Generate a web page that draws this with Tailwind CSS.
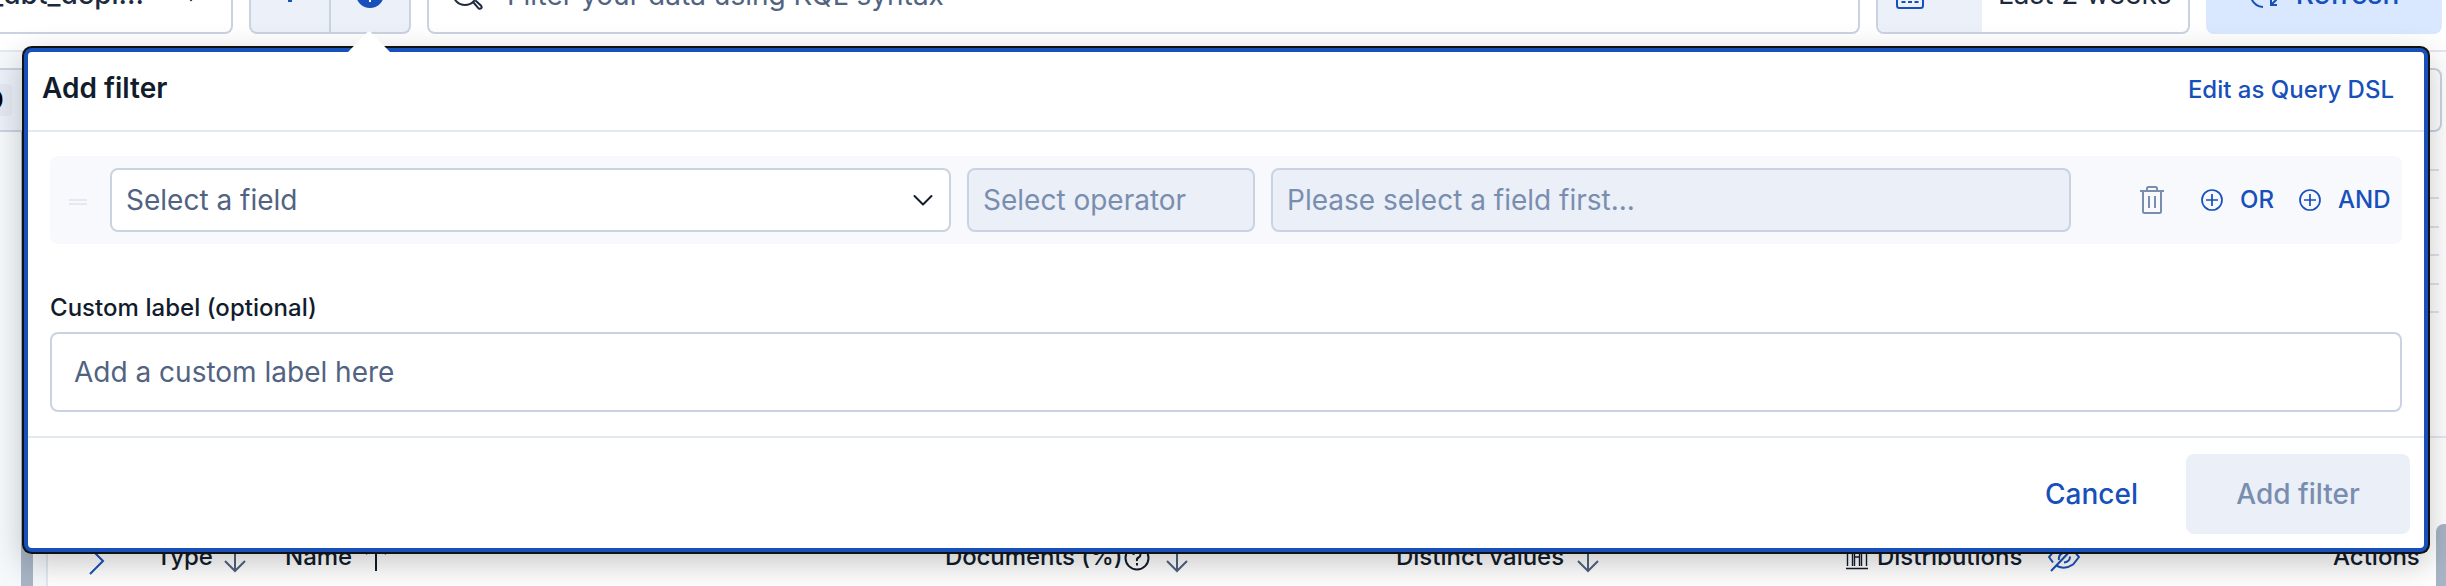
<!DOCTYPE html>
<html lang="en">
<head>
<meta charset="utf-8">
<title>Add filter</title>
<script src="https://cdn.jsdelivr.net/npm/@tailwindcss/browser@4"></script>
</head>
<body class="relative w-[2446px] h-[586px] overflow-hidden bg-white font-['Inter',sans-serif] text-[#111c2c]">

<!-- Page behind the popover -->
<div class="flex flex-col h-[586px]">
  <header class="flex h-[52px] shrink-0 items-start gap-4 border-b-2 border-[#e3e8f2] pr-1">
    <div class="flex h-[34px] w-[233px] shrink-0 overflow-hidden rounded-br-lg border-b-2 border-r-2 border-[#cad3e2]">
      <div class="-mt-[22px] flex h-8 w-[144px] shrink-0 justify-end"><span class="whitespace-nowrap text-[28px] font-medium leading-8 text-[#1d2a3e]">_dbt_depl...</span></div>
      <svg class="ml-9 h-4 w-5 shrink-0" viewBox="0 0 20 16" fill="none" stroke="#1d2a3e" stroke-width="2"><path d="M3-8l8 8L19-8"/></svg>
    </div>
    <div class="flex h-[34px] w-[162px] shrink-0 overflow-hidden rounded-b-lg border-2 border-t-0 border-[#cad3e2] bg-[#ecf1f9]">
      <div class="flex w-20 justify-center border-r-2 border-[#cad3e2]"><svg class="h-[32px] w-8" viewBox="0 0 32 32"><path d="M14 0h4v2h-4z" fill="#1750ba"/></svg></div>
      <div class="flex w-[78px] justify-center"><svg class="h-[32px] w-8" viewBox="0 0 32 32"><circle cx="16" cy="-6" r="14" fill="#1750ba"/><path d="M15 0h2v2h-2z" fill="#fff"/></svg></div>
    </div>
    <div class="flex h-[34px] w-[1433px] shrink-0 overflow-hidden rounded-b-lg border-2 border-t-0 border-[#cad3e2] pl-6">
      <svg class="h-8 w-8 shrink-0" viewBox="0 0 32 32" fill="none" stroke="#1d2a3e" stroke-width="2"><circle cx="12" cy="-7" r="12"/><path d="M20.500 2.500l5 5.800q1.500 1 2.600 0t0-2.600L22.500.5"/></svg>
      <span class="-mt-[21px] ml-[22px] h-8 whitespace-nowrap text-[28px] leading-8 text-[#516381]">Filter your data using KQL syntax</span>
    </div>
    <div class="flex h-[34px] w-[314px] shrink-0 overflow-hidden rounded-b-lg border-2 border-t-0 border-[#cad3e2]">
      <div class="flex w-[104px] shrink-0 bg-[#ecf1f9] pl-[18px]"><svg class="h-8 w-7" viewBox="0 0 28 32" fill="none" stroke="#1750ba" stroke-width="2"><path d="M1-2v7.500q0 2.500 2.500 2.500h21q2.500 0 2.500-2.500V-2"/><path d="M5.500 2h17" stroke-dasharray="4 2.500"/></svg></div>
      <span class="-mt-[22px] ml-[16px] h-8 whitespace-nowrap text-[28px] leading-8 text-[#1d2a3e]">Last 2 weeks</span>
    </div>
    <div class="flex h-[34px] w-[236px] shrink-0 justify-center gap-[19px] overflow-hidden rounded-b-lg bg-[#d9e8ff]">
      <svg class="h-8 w-7" viewBox="0 0 28 32" fill="none" stroke="#1750ba" stroke-width="2"><path d="M2.500-1Q6 6.500 14 7M22-2v7h7M22 5l7-7"/></svg>
      <span class="-mt-[22px] h-8 text-[28px] font-medium leading-8 text-[#1750ba]">Refresh</span>
    </div>
  </header>
  <div class="flex h-20 shrink-0 items-end justify-between">
    <div class="flex h-20 w-80 items-end bg-[#f6f9fc]">
      <div class="flex h-16 w-80 items-center border-y-2 border-[#cad3e2] bg-[#ecf1f9]">
        <div class="flex h-8 w-3 items-center overflow-hidden rounded-r bg-[#e3e8f2]"><span class="-ml-[14px] text-[26px] font-bold leading-8 text-black">0</span></div>
      </div>
    </div>
    <div class="mr-1 h-16 w-40 rounded-lg border-2 border-[#cad3e2]"></div>
  </div>
  <div class="flex grow">
    <div class="w-[21px] shrink-0 bg-[#f6f9fc]"></div>
    <div class="w-3 shrink-0 bg-[#a8b5c6]"></div>
    <div class="w-[13px] shrink-0 bg-[#f6f9fc]"></div>
    <div class="flex w-[2377px] shrink-0 flex-col border-l-2 border-[#e3e8f2]">
      <div class="mt-[421px] flex h-[33px] items-start text-[24px] font-medium leading-8">
        <svg class="-mt-[5px] ml-10 h-8 w-[18px] shrink-0" viewBox="0 0 18 32" fill="none" stroke="#1750ba" stroke-width="2"><path d="M2 0l13 13L2 26"/></svg>
        <span class="-mt-3 ml-[50px] w-[68px] shrink-0">Type</span>
        <svg class="-mt-3 h-8 w-[22px] shrink-0" viewBox="0 0 22 32" fill="none" stroke="#516381" stroke-width="2"><path d="M11 4v26M1 20l10 10 10-10"/></svg>
        <span class="-mt-3 ml-[39px] w-[80px] shrink-0">Name</span>
        <svg class="-mt-3 h-8 w-[22px] shrink-0" viewBox="0 0 22 32" fill="none" stroke="#111c2c" stroke-width="2"><path d="M11 4v26M1 13L11 3l10 10"/></svg>
        <span class="-mt-3 ml-[558px] w-[179px] shrink-0 whitespace-nowrap tracking-[-0.1px]">Documents (%)</span>
        <svg class="-mt-3 h-8 w-[26px] shrink-0" viewBox="0 0 26 32" fill="none" stroke="#111c2c" stroke-width="2"><circle cx="13" cy="17" r="11.500"/><path d="M9.500 14q0-4 3.500-4t3.500 3.500q0 2-2 3T13 20M13 22v2.500"/></svg>
        <svg class="-mt-3 ml-4 h-8 w-[22px] shrink-0" viewBox="0 0 22 32" fill="none" stroke="#516381" stroke-width="2"><path d="M11 4v26M1 20l10 10 10-10"/></svg>
        <span class="-mt-3 ml-[208px] w-[181px] shrink-0 whitespace-nowrap">Distinct values</span>
        <svg class="-mt-3 h-8 w-[22px] shrink-0" viewBox="0 0 22 32" fill="none" stroke="#516381" stroke-width="2"><path d="M11 4v26M1 20l10 10 10-10"/></svg>
        <svg class="-mt-3 ml-[247px] h-8 w-[22px] shrink-0" viewBox="0 0 22 32" fill="none" stroke="#111c2c" stroke-width="1.400"><path d="M0 27.500h22M1.500 25V10h5v15M8.500 25V6h5v19M15.500 25V10h5v15M8.500 16h5"/></svg>
        <span class="-mt-3 ml-[9px] w-[171px] shrink-0">Distributions</span>
        <svg class="-mt-3 h-8 w-[32px] shrink-0" viewBox="0 0 32 32" fill="none" stroke="#1750ba" stroke-width="2"><path d="M20 7.500Q12 5 5.500 10.500L1 16l4 5.500M9 25q8 4 16-1.500l6-7.500-5-6M3 30L28 4M11 19q-1-6 6-8M16 21.500q6-.5 6-6"/></svg>
        <span class="-mt-3 ml-[253px] shrink-0">Actions</span>
      </div>
    </div>
    <div class="flex grow flex-col items-end">
      <div class="mr-[7px] mt-[37px] flex w-3 flex-col gap-[26.4px]">
        <div class="h-[2px] bg-[#dfe3ee]"></div><div class="h-[2px] bg-[#dfe3ee]"></div><div class="h-[2px] bg-[#dfe3ee]"></div><div class="h-[2px] bg-[#dfe3ee]"></div><div class="h-[2px] bg-[#dfe3ee]"></div><div class="h-[2px] bg-[#dfe3ee]"></div>
      </div>
      <div class="mt-[123px] h-[2px] w-full bg-[#e3e8f2]"></div>
      <div class="mt-[86px] w-[10px] grow rounded-tl-lg bg-[#a8b5c6]"></div>
    </div>
  </div>
</div>

<!-- Popover -->
<section class="absolute left-[28px] top-[52px] flex h-[496px] w-[2396px] flex-col rounded bg-white shadow-[0_0_0_4px_#1750ba,0_0_0_6px_#111,0_10px_32px_6px_rgba(0,0,0,.22)]">
  <svg class="absolute -top-[21px] left-[320px] h-[22px] w-[42px]" viewBox="0 0 42 22"><path d="M0 22v-1L19.500 1q1.500-1.200 3 0L42 21v1z" fill="#fff"/></svg>
  <header class="flex h-20 items-center justify-between border-b-2 border-[#e3e8f2] pl-[14px] pr-[30px]">
    <h2 class="pb-1.5 text-[28px] font-semibold">Add filter</h2>
    <span class="pb-[3px] text-[24px] font-medium text-[#1750ba]">Edit as Query DSL</span>
  </header>
  <div class="flex h-[304px] flex-col px-[22px] pt-6">
    <div class="flex h-[88px] items-center rounded-lg bg-[#f7f9fd] text-[28px]">
      <div class="ml-[19px] mt-1 h-1.5 w-[18px] border-y-2 border-[#e3e8f2]"></div>
      <div class="ml-[23px] flex h-16 w-[841px] items-center justify-between rounded-lg border-2 border-[#cad3e2] bg-white pl-[14px] pr-4 text-[#516381]">
        <span>Select a field</span>
        <svg class="h-5 w-5" viewBox="0 0 20 20" fill="none" stroke="#111c2c" stroke-width="2" stroke-linecap="round" stroke-linejoin="round"><path d="M1.500 6l8.500 8.500L18.500 6"/></svg>
      </div>
      <div class="ml-4 flex h-16 w-[288px] items-center rounded-lg border-2 border-[#cad3e2] bg-[#ebeff7] pl-[14px] text-[#798eaf]">Select operator</div>
      <div class="ml-4 flex h-16 w-[800px] items-center rounded-lg border-2 border-[#cad3e2] bg-[#ebeff7] pl-[14px] text-[#798eaf]">Please select a field first...</div>
      <svg class="ml-[69px] h-7 w-6 shrink-0" viewBox="0 0 24 28" fill="none" stroke="#798eaf" stroke-width="2"><path d="M0 5h24M7 5V2.500Q7 1 8.500 1h7Q17 1 17 2.500V5M3 5v20.500Q3 27 4.500 27h15q1.500 0 1.500-1.500V5M9 10v12M15 10v12"/></svg>
      <svg class="ml-[37px] h-[22px] w-[22px] shrink-0" viewBox="0 0 22 22" fill="none" stroke="#1750ba" stroke-width="1.700"><circle cx="11" cy="11" r="10"/><path d="M5 11h12M11 5v12"/></svg>
      <span class="ml-[17px] w-[59px] shrink-0 text-[24px] font-medium text-[#1750ba]">OR</span>
      <svg class="h-[22px] w-[22px] shrink-0" viewBox="0 0 22 22" fill="none" stroke="#1750ba" stroke-width="1.700"><circle cx="11" cy="11" r="10"/><path d="M5 11h12M11 5v12"/></svg>
      <span class="ml-[17px] text-[24px] font-medium text-[#1750ba]">AND</span>
    </div>
    <label class="mt-[46px] h-[42px] text-[24px] font-medium leading-9 tracking-[0.04px]">Custom label (optional)</label>
    <div class="flex h-20 shrink-0 items-center rounded-lg border-2 border-[#cad3e2] pl-[22px] text-[28px] text-[#516381]">Add a custom label here</div>
  </div>
  <footer class="flex h-28 items-center justify-end gap-12 border-t-2 border-[#e3e8f2] pr-[14px] pt-0.5 text-[28px] font-medium">
    <span class="text-[#1750ba]">Cancel</span>
    <div class="flex h-20 w-[224px] items-center justify-center rounded-lg bg-[#ebeff7] text-[#798eaf]">Add filter</div>
  </footer>
</section>
</body>
</html>
